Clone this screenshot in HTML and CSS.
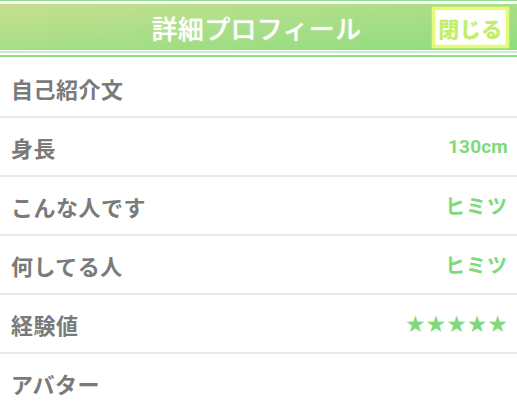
FILE: index.html
```html
<!DOCTYPE html>
<html lang="ja">
<head>
<meta charset="utf-8">
<link rel="stylesheet" href="styles.css">
</head>
<body>
<div class="panel">
  <header class="head">
    <div class="bar">
      <h1 class="title">詳細プロフィール</h1>
      <button class="close">閉じる</button>
    </div>
  </header>
  <ul class="rows">
    <li class="row"><span class="label">自己紹介文</span></li>
    <li class="row"><span class="label">身長</span><span class="value num">130cm</span></li>
    <li class="row"><span class="label">こんな人です</span><span class="value">ヒミツ</span></li>
    <li class="row"><span class="label">何してる人</span><span class="value">ヒミツ</span></li>
    <li class="row"><span class="label">経験値</span><span class="value stars">★★★★★</span></li>
    <li class="row"><span class="label">アバター</span></li>
  </ul>
</div>
</body>
</html>
```
FILE: styles.css
```css
* { box-sizing: border-box; }
html, body { margin: 0; padding: 0; background: #fff; }
body {
  font-family: "Noto Sans CJK JP", "Noto Sans", sans-serif;
  width: 517px;
  height: 411px;
  overflow: hidden;
}
.head {
  border-top: 1px solid #8fe08a;
  padding-top: 3px;
  border-bottom: 2px solid #8fe08a;
  margin-bottom: 2px;
}
.bar {
  position: relative;
  height: 47px;
  background: linear-gradient(175deg, #c6e08e 0%, #a8de88 50%, #8edd7e 100%);
  border-bottom: 1px solid #fff;
  box-shadow: 0 2px 0 #c8f0c8, 0 3px 0 #fff;
  margin-bottom: 4px;
  display: flex;
  align-items: center;
  justify-content: center;
}
.title {
  margin: 0 0 0 -4px;
  color: #fff;
  font-size: 26px;
  font-weight: 500;
  letter-spacing: 0.3px;
  text-shadow: 0 0 2px rgba(255,255,255,0.5);
}
.close {
  position: absolute;
  right: 8px;
  top: 3px;
  width: 77px;
  height: 41px;
  background: #fff;
  border: 3px solid #e2fb7a;
  box-shadow: 0 0 2px #d8f860, inset 0 0 2px #e8fb9a;
  color: #c2ee6a;
  font-family: "Noto Sans CJK JP", sans-serif;
  font-weight: 900;
  font-size: 21px;
  padding: 0;
  letter-spacing: 0.5px;
}
.rows { list-style: none; margin: 0; padding: 0; }
.row {
  height: 59px;
  border-bottom: 2px solid #e8e8e8;
  display: flex;
  align-items: center;
  justify-content: space-between;
  padding: 0 9px 0 11px;
}
.label {
  color: #7a7a7a;
  font-size: 22px;
  font-weight: 700;
  letter-spacing: 0.5px;
}
.value {
  color: #7fd97a;
  font-size: 20px;
  font-weight: 700;
  letter-spacing: 1px;
}
.num { font-family: Roboto, "Noto Sans", sans-serif; font-size: 19px; letter-spacing: 0.2px; margin-right: 0; }
.stars { font-size: 23px; letter-spacing: 0; font-family: "DejaVu Sans", sans-serif; }
```
